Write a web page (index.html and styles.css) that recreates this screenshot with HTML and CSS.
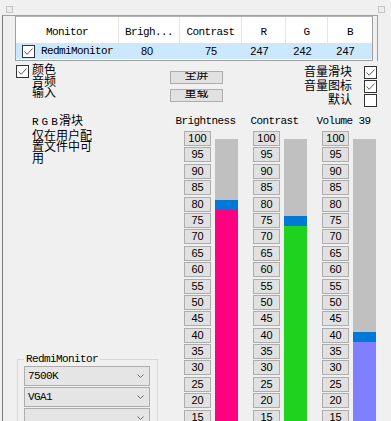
FILE: index.html
```html
<!DOCTYPE html>
<html lang="zh-CN">

<head>
  <meta charset="UTF-8">
  <meta name="viewport" content="width=device-width, initial-scale=1.0">
  <title>Monitor Control</title>
  <link rel="stylesheet" href="styles.css">
</head>

<body>
  <div class="titlebar">
    <span class="grip"></span>
    <span class="grip"></span>
  </div>

  <div class="frame">
    <div class="list-area">
      <div class="list">
        <div class="list-head mono">
          <div>Monitor</div>
          <div>Brigh...</div>
          <div>Contrast</div>
          <div>R</div>
          <div>G</div>
          <div>B</div>
        </div>
        <div class="list-row">
          <div class="cell-name mono">
            <span class="check"><svg viewBox="0 0 11 11"><polyline points="1.5,5.5 4.2,8.3 9.5,2.5" /></svg></span>
            RedmiMonitor
          </div>
          <div class="num">80</div>
          <div class="num">75</div>
          <div class="num">247</div>
          <div class="num">242</div>
          <div class="num">247</div>
        </div>
      </div>
    </div>

    <div class="controls">
      <div class="opt-left">
        <span class="check"><svg viewBox="0 0 11 11"><polyline points="1.5,5.5 4.2,8.3 9.5,2.5" /></svg></span>
        <div class="lines">颜色<br>音频<br>输入</div>
      </div>
      <div class="actions">
        <button class="btn"><span>全屏</span></button>
        <button class="btn"><span>重载</span></button>
      </div>
      <div class="opt-right">
        <div class="opt">
          <span>音量滑块</span>
          <span class="check"><svg viewBox="0 0 11 11"><polyline points="1.5,5.5 4.2,8.3 9.5,2.5" /></svg></span>
        </div>
        <div class="opt">
          <span>音量图标</span>
          <span class="check"><svg viewBox="0 0 11 11"><polyline points="1.5,5.5 4.2,8.3 9.5,2.5" /></svg></span>
        </div>
        <div class="opt">
          <span>默认</span>
          <span class="check"></span>
        </div>
      </div>
    </div>

    <div class="main">
      <div class="side">
        <p class="note"><span class="mono rgb">R G B</span>滑块<br>仅在用户配置文件中可用</p>
        <fieldset class="group">
          <legend class="mono">RedmiMonitor</legend>
          <div class="combo"><span class="mono">7500K</span><svg class="chev" viewBox="0 0 7 4"><polyline points="0.5,0.5 3.5,3.5 6.5,0.5" /></svg></div>
          <div class="combo"><span class="mono">VGA1</span><svg class="chev" viewBox="0 0 7 4"><polyline points="0.5,0.5 3.5,3.5 6.5,0.5" /></svg></div>
          <div class="combo"><span class="mono"></span><svg class="chev" viewBox="0 0 7 4"><polyline points="0.5,0.5 3.5,3.5 6.5,0.5" /></svg></div>
        </fieldset>
      </div>

      <div class="sliders">
        <div class="slider">
          <div class="slider-title mono">Brightness</div>
          <div class="slider-body">
            <div class="steps"></div>
            <div class="bar" data-value="80">
              <div class="bar-empty"></div>
              <div class="bar-thumb"></div>
              <div class="bar-fill fill-pink"></div>
            </div>
          </div>
        </div>
        <div class="slider">
          <div class="slider-title mono">Contrast</div>
          <div class="slider-body">
            <div class="steps"></div>
            <div class="bar" data-value="75">
              <div class="bar-empty"></div>
              <div class="bar-thumb"></div>
              <div class="bar-fill fill-green"></div>
            </div>
          </div>
        </div>
        <div class="slider">
          <div class="slider-title mono">Volume 39</div>
          <div class="slider-body">
            <div class="steps"></div>
            <div class="bar" data-value="39">
              <div class="bar-empty"></div>
              <div class="bar-thumb"></div>
              <div class="bar-fill fill-violet"></div>
            </div>
          </div>
        </div>
      </div>
    </div>
  </div>

  <script>
    // step buttons 100 .. 0
    const stepValues = [];
    for (let v = 100; v >= 0; v -= 5) stepValues.push(v);

    document.querySelectorAll('.steps').forEach(steps => {
      steps.innerHTML = stepValues
        .map(v => '<button class="step">' + v + '</button>')
        .join('');
    });

    // bar: empty part above the thumb depends on the value
    document.querySelectorAll('.bar').forEach(bar => {
      const value = Number(bar.dataset.value);
      const empty = Math.round(3.22 * (100 - value) - 3.4);
      bar.querySelector('.bar-empty').style.height = Math.max(empty, 0) + 'px';
    });
  </script>
</body>

</html>
```

FILE: styles.css
```css
html,
body {
  margin: 0;
  height: 421px;
  overflow: hidden;
}

body {
  background: #f0f0f0;
  color: #000;
  font-family: "Noto Sans CJK SC", sans-serif;
  font-size: 12px;
}

.mono {
  font-family: "Liberation Mono", monospace;
  font-size: 11px;
  letter-spacing: -0.6px;
}

.num {
  font-family: "Liberation Sans", Arial, sans-serif;
  font-size: 11px;
}

/* top strip */
.titlebar {
  display: flex;
  justify-content: space-between;
  height: 15px;
  box-sizing: border-box;
  padding: 6px 6px 0 6px;
}

.grip {
  width: 7px;
  height: 7px;
  box-sizing: border-box;
  border: 1px solid #c4c4c4;
  background: #ececec;
}

.frame {
  width: 375px;
  margin-left: 2px;
  border-left: 1px solid #7a7a7a;
  border-top: 1px solid #a0a0a0;
}

/* list view */
.list-area {
  width: 375px;
  box-sizing: border-box;
  padding-left: 12px;
  border-right: 1px solid #a0a0a0;
}

.list {
  width: 358px;
  box-sizing: border-box;
  border: 1px solid #a0a0a0;
  border-top-color: #b4b4b4;
  background: #fff;
  padding-bottom: 1px;
}

.list-head,
.list-row {
  display: grid;
  grid-template-columns: 103px 61px 62px 44px 42px 44px;
}

.list-head div {
  height: 26px;
  box-sizing: border-box;
  padding-top: 8px;
  line-height: 14px;
  text-align: center;
  white-space: nowrap;
  border-right: 1px solid #e5e5e5;
}

.list-head div:last-child {
  border-right: none;
}

.list-row {
  height: 16px;
  background: #cce8ff;
  align-items: center;
}

.list-row .num {
  text-align: center;
  line-height: 16px;
}

.list-row .num:nth-child(2) {
  padding-right: 5px;
}

.list-row .num:nth-child(4),
.list-row .num:nth-child(5),
.list-row .num:nth-child(6) {
  padding-right: 9px;
}

.cell-name {
  display: flex;
  align-items: center;
  gap: 6px;
  padding-left: 6px;
  white-space: nowrap;
}

/* checkbox */
.check {
  display: inline-flex;
  flex: none;
  width: 13px;
  height: 13px;
  box-sizing: border-box;
  border: 1px solid #333;
  background: #fff;
}

.check svg {
  width: 11px;
  height: 11px;
  fill: none;
  stroke: #5a5a5a;
  stroke-width: 1;
}

/* options row */
.controls {
  display: flex;
  height: 50px;
}

.opt-left {
  display: flex;
  gap: 3px;
  width: 167px;
  box-sizing: border-box;
  padding: 4px 0 0 13px;
}

.lines {
  margin-top: -2px;
  line-height: 11.5px;
}

.actions {
  display: flex;
  flex-direction: column;
  gap: 5px;
  padding-top: 10px;
}

.btn {
  display: flex;
  justify-content: center;
  align-items: flex-start;
  width: 53px;
  height: 13px;
  padding: 0;
  overflow: hidden;
  border: 1px solid #adadad;
  background: #e1e1e1;
  font-family: "Noto Sans CJK SC", sans-serif;
  font-size: 12px;
  line-height: 12px;
}

.btn span {
  margin-top: -4px;
}

.opt-right {
  margin-left: auto;
  padding: 0 1px 0 0;
  padding-top: 3px;
}

.opt {
  display: flex;
  justify-content: flex-end;
  align-items: flex-start;
  gap: 12px;
  height: 14px;
  line-height: 14px;
}

.opt .check {
  margin-top: 2px;
}

/* lower part */
.main {
  display: flex;
}

.side {
  width: 181px;
  flex: none;
}

.note {
  width: 61px;
  margin: 3px 0 0 29px;
  line-height: 11.5px;
}

.rgb {
  letter-spacing: -1.8px;
  margin-right: 3px;
}

.group {
  width: 141px;
  box-sizing: border-box;
  margin: 189px 0 0 14px;
  padding: 0 7px 6px 6px;
  border: 1px solid #d6d6d6;
  min-width: 0;
}

.group legend {
  padding: 0 2px;
  line-height: 14px;
}

.combo {
  display: flex;
  justify-content: space-between;
  align-items: center;
  height: 20px;
  box-sizing: border-box;
  margin-bottom: 1px;
  padding: 0 5px 0 3px;
  border: 1px solid #adadad;
  background: #e5e5e5;
}

.chev {
  width: 7px;
  height: 4px;
  fill: none;
  stroke: #6a6a6a;
  stroke-width: 1;
}

/* sliders */
.sliders {
  display: flex;
  gap: 15px;
  padding-top: 3px;
}

.slider {
  width: 54px;
}

.slider-title {
  display: flex;
  justify-content: center;
  width: 43px;
  height: 14px;
  line-height: 14px;
  white-space: nowrap;
}

.slider-body {
  display: flex;
  gap: 4px;
  margin-top: 3px;
}

.steps {
  display: flex;
  flex-direction: column;
  gap: 1.4px;
  width: 27px;
}

.step {
  width: 27px;
  height: 15px;
  padding: 0;
  box-sizing: border-box;
  border: 1px solid #adadad;
  background: #e1e1e1;
  font-family: "Liberation Sans", Arial, sans-serif;
  font-size: 11px;
  line-height: 13px;
  text-align: center;
  color: #000;
}

.bar {
  display: flex;
  flex-direction: column;
  width: 23px;
  height: 330px;
  margin-top: 8px;
}

.bar-empty {
  background: #c0c0c0;
}

.bar-thumb {
  height: 10px;
  background: #0078d7;
}

.bar-fill {
  flex: 1;
}

.fill-pink {
  background: #ff0080;
}

.fill-green {
  background: #1ed21e;
}

.fill-violet {
  background: #8080ff;
}
```
